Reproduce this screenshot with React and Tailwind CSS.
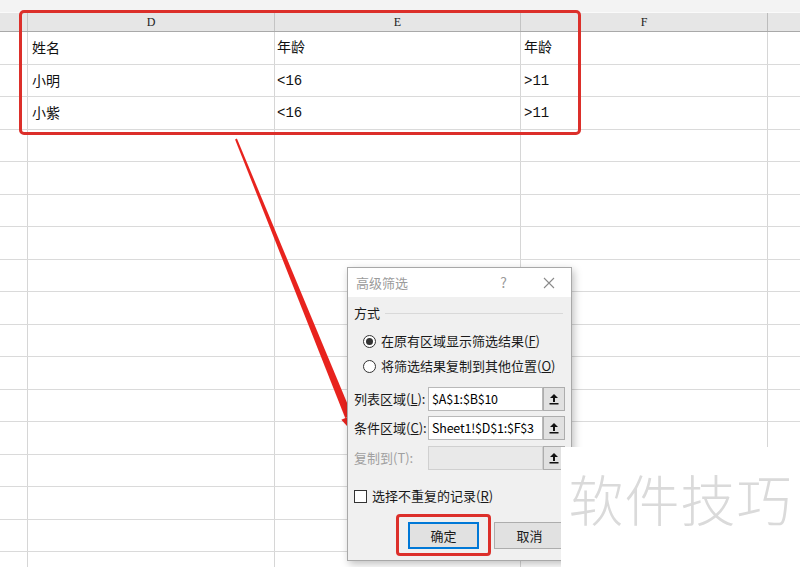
import React from 'react';

const rows = [
  ['姓名', '年龄', '年龄'],
  ['小明', '<16', '>11'],
  ['小紫', '<16', '>11'],
];

const RangeButton = () => (
  <div className="w-[22px] h-full bg-[#e1e1e1] border border-[#adadad] flex items-center justify-center">
    <svg width="10" height="12" viewBox="0 0 10 12">
      <path d="M5 1 L9 5 L6 5 L6 9 L4 9 L4 5 L1 5 Z" fill="#111" />
      <rect x="0.5" y="10" width="9" height="1.5" fill="#111" />
    </svg>
  </div>
);

const FieldRow = ({ label, value, disabled }) => (
  <div className="flex items-center h-[24px]">
    <span className={`w-[74px] shrink-0 ${disabled ? 'text-[#a0a0a0]' : 'text-[#1a1a1a]'}`}>{label}</span>
    <div
      className={`w-[116px] h-full border flex items-center pl-[3px] text-[12.5px] tracking-[-0.2px] overflow-hidden whitespace-nowrap ${
        disabled ? 'bg-[#e9e9e9] border-[#d0d0d0]' : 'bg-white border-[#b9b9b9]'
      }`}
    >
      {value}
    </div>
    <RangeButton />
  </div>
);

const App = () => {
  // arrow geometry
  const S = [236, 139];
  const T = [357, 437];
  const dx = T[0] - S[0];
  const dy = T[1] - S[1];
  const len = Math.hypot(dx, dy);
  const u = [dx / len, dy / len];
  const p = [u[1], -u[0]];
  const B = [T[0] - 22 * u[0], T[1] - 22 * u[1]];
  const pt = (c, k) => `${c[0] + k * p[0]},${c[1] + k * p[1]}`;
  const shaft = [pt(S, 1), pt(B, 3.8), pt(B, -3.8), pt(S, -1)].join(' ');
  const head = [pt(B, 8), `${T[0]},${T[1]}`, pt(B, -8)].join(' ');

  return (
    <div className="relative w-[800px] h-[567px] overflow-hidden bg-white font-['Noto_Sans_CJK_SC',sans-serif]">
      {/* sheet */}
      <div className="h-[13px] bg-[#f3f3f3] border-b border-[#fafafa]" />
      <div className="grid grid-cols-[28px_247px_246px_247px_1fr] h-[19px] bg-[#e6e6e6] border-b border-[#a9a9a9] font-['Liberation_Serif',serif] text-[12px] text-[#222]">
        <div className="border-r border-[#c4c4c4]" />
        <div className="border-r border-[#c4c4c4] flex items-center justify-center">D</div>
        <div className="border-r border-[#c4c4c4] flex items-center justify-center">E</div>
        <div className="border-r border-[#bcbcbc] flex items-center justify-center">F</div>
        <div />
      </div>
      {Array.from({ length: 17 }).map((_, i) => (
        <div
          key={i}
          className="grid grid-cols-[28px_247px_246px_247px_1fr] h-[32.5px] border-b border-[#dadada] text-[14px] text-[#111]"
        >
          <div className="border-r border-[#d6d6d6]" />
          <div className="border-r border-[#d6d6d6] flex items-center pl-[4px]">{rows[i]?.[0]}</div>
          <div className="border-r border-[#d6d6d6] flex items-center pl-[2px] pt-[2px] font-['Liberation_Mono','Noto_Sans_CJK_SC',monospace]">
            {rows[i]?.[1]}
          </div>
          <div className="border-r border-[#d6d6d6] flex items-center pl-[3px] pt-[2px] font-['Liberation_Mono','Noto_Sans_CJK_SC',monospace]">
            {rows[i]?.[2]}
          </div>
          <div />
        </div>
      ))}

      {/* annotation around table */}
      <div className="absolute left-[19px] top-[10px] w-[562px] h-[125px] border-[3px] border-[#dc2f2a] rounded-[5px]" />

      {/* arrow */}
      <svg className="absolute left-0 top-0 pointer-events-none" width="800" height="567">
        <polygon points={shaft} fill="#e8231e" />
        <polygon points={head} fill="#e8231e" />
      </svg>

      {/* dialog */}
      <div className="absolute left-[347px] top-[267px] w-[225px] h-[294px] bg-[#f0f0f0] border border-[#a8a8a8] shadow-[2px_3px_8px_rgba(0,0,0,0.25)] text-[13px] flex flex-col">
        <div className="h-[29px] bg-white flex items-center pl-[8px] text-[#9b9b9b]">
          <span className="flex-1">高级筛选</span>
          <span className="mr-[36px] text-[14px]">?</span>
          <svg width="12" height="12" viewBox="0 0 12 12" className="mr-[16px]">
            <path d="M1 1 L11 11 M11 1 L1 11" stroke="#8a8a8a" strokeWidth="1.1" />
          </svg>
        </div>
        <div className="flex flex-col px-[6px]">
          <div className="mt-[7px] h-[18px] flex items-center text-[#1a1a1a]">
            <span>方式</span>
            <div className="flex-1 ml-[5px] mr-[2px] border-t border-[#d9d9d9]" />
          </div>
          <div className="mt-[8px] h-[22px] flex items-center pl-[9px] text-[#1a1a1a]">
            <span className="w-[13px] h-[13px] rounded-full border border-[#333] bg-white flex items-center justify-center mr-[5px]">
              <span className="w-[7px] h-[7px] rounded-full bg-[#333]" />
            </span>
            <span>
              在原有区域显示筛选结果(<span className="underline">F</span>)
            </span>
          </div>
          <div className="mt-[3px] h-[22px] flex items-center pl-[9px] text-[#1a1a1a]">
            <span className="w-[13px] h-[13px] rounded-full border border-[#333] bg-white mr-[5px]" />
            <span>
              将筛选结果复制到其他位置(<span className="underline">O</span>)
            </span>
          </div>
          <div className="mt-[10px]">
            <FieldRow
              label={
                <>
                  列表区域(<span className="underline">L</span>):
                </>
              }
              value="$A$1:$B$10"
            />
          </div>
          <div className="mt-[5px]">
            <FieldRow
              label={
                <>
                  条件区域(<span className="underline">C</span>):
                </>
              }
              value="Sheet1!$D$1:$F$3"
            />
          </div>
          <div className="mt-[6px]">
            <FieldRow label="复制到(T):" value="" disabled />
          </div>
          <div className="mt-[17px] h-[18px] flex items-center text-[#1a1a1a]">
            <span className="w-[13px] h-[13px] border border-[#333] bg-white mr-[5px]" />
            <span>
              选择不重复的记录(<span className="underline">R</span>)
            </span>
          </div>
          <div className="mt-[17px] h-[27px] flex">
            <div className="ml-[54px] w-[73px] h-full bg-[#e1e1e1] border-2 border-[#0078d7] flex items-center justify-center text-[#1a1a1a]">
              确定
            </div>
            <div className="ml-[15px] w-[73px] h-full bg-[#e1e1e1] border border-[#adadad] flex items-center justify-center text-[#1a1a1a]">
              取消
            </div>
          </div>
        </div>
      </div>

      {/* annotation around OK button */}
      <div className="absolute left-[396px] top-[514px] w-[95px] h-[42px] border-[3px] border-[#dc2f2a] rounded-[4px]" />

      {/* watermark */}
      <div className="absolute left-[561px] top-[447px] w-[239px] h-[120px] bg-white flex items-center justify-center">
        <span className="text-[55px] font-light text-[#dadada] tracking-[1px] leading-none mt-[-20px]">软件技巧</span>
      </div>
    </div>
  );
};

export default App;
